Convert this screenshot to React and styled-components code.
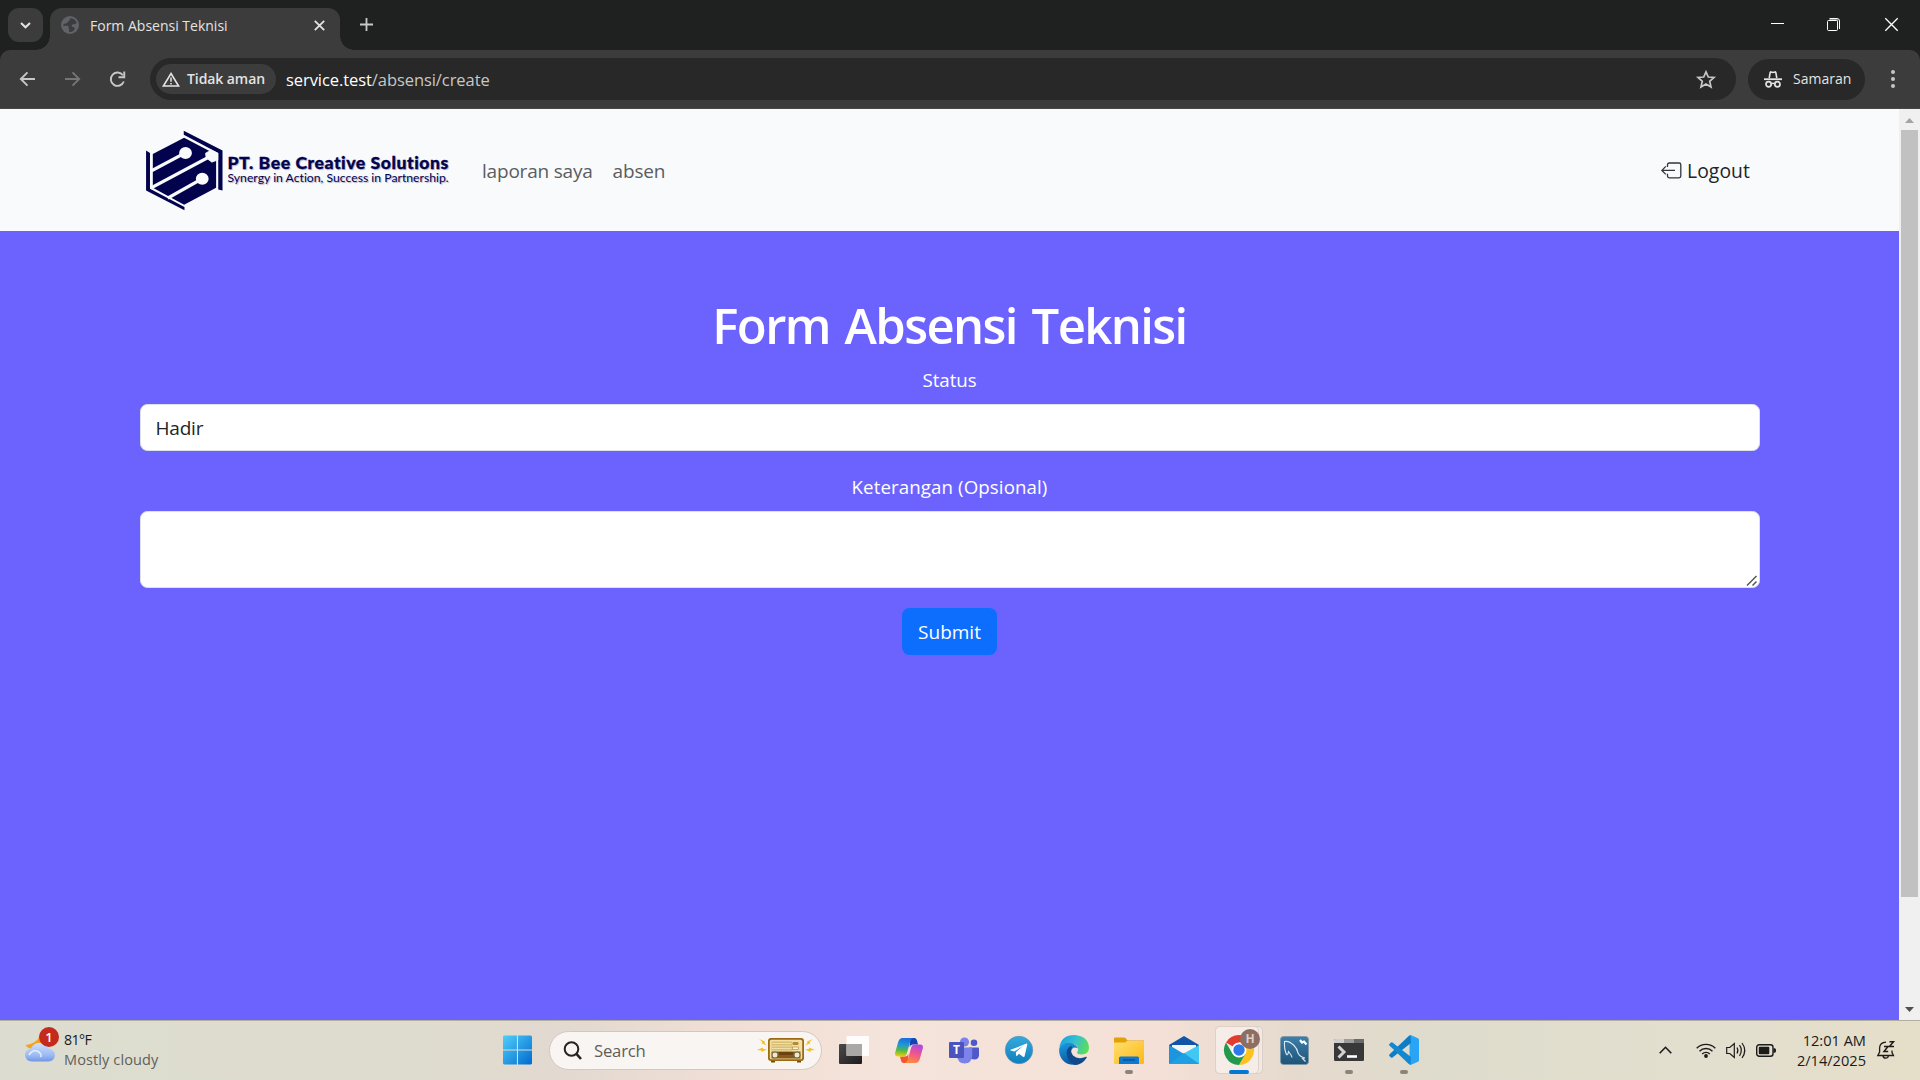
import React from "react";
import styled, { createGlobalStyle, css } from "styled-components";

const Global = createGlobalStyle`
  * { box-sizing: border-box; }
  html, body { margin: 0; padding: 0; overflow: hidden; }
  body { font-family: "Open Sans", "Noto Sans", sans-serif; }
  svg { display: block; flex: none; overflow: visible; }
`;

const Screen = styled.div`
  width: 1920px;
  height: 1080px;
  display: flex;
  flex-direction: column;
  overflow: hidden;
`;

const Label = styled.span`
  font-size: ${(p) => p.$size}px;
  font-weight: ${(p) => p.$weight || 400};
  letter-spacing: ${(p) => p.$track || 0}px;
  color: ${(p) => p.$color || "inherit"};
  line-height: ${(p) => p.$line || 20}px;
  white-space: nowrap;
`;

/* ---------- browser chrome ---------- */
const TabStrip = styled.div`
  height: 50px;
  flex: none;
  background: #1f2120;
  display: flex;
  align-items: flex-start;
  padding: 8px 0 0 8px;
`;
const TabSearch = styled.button`
  width: 35px;
  height: 34px;
  border: 0;
  border-radius: 11px;
  background: #3c3c3c;
  display: flex;
  align-items: center;
  justify-content: center;
  padding: 0;
`;
const Tab = styled.div`
  position: relative;
  width: 290px;
  height: 42px;
  margin-left: 7px;
  padding: 0 15px 8px 11px;
  border-radius: 12px 12px 0 0;
  background: #3c3c3c;
  display: flex;
  align-items: center;
  &::before,
  &::after {
    content: "";
    position: absolute;
    bottom: 0;
    width: 14px;
    height: 14px;
  }
  &::before {
    left: -14px;
    background: radial-gradient(circle at 0 0, transparent 13.5px, #3c3c3c 14px);
  }
  &::after {
    right: -14px;
    background: radial-gradient(circle at 100% 0, transparent 13.5px, #3c3c3c 14px);
  }
`;
const TabTitle = styled.div`
  flex: 1;
  padding: 2px 0 0 11px;
  color: #e3e3e3;
  display: flex;
`;
const NewTab = styled.div`
  padding: 10px 0 0 19.5px;
`;
const WindowButtons = styled.div`
  margin-left: auto;
  display: flex;
  height: 33px;
`;
const WindowButton = styled.div`
  width: 57px;
  height: 33px;
  display: flex;
  align-items: center;
  justify-content: center;
`;
const ToolbarBack = styled.div`
  background: #1f2120;
  flex: none;
`;
const Toolbar = styled.div`
  height: 59px;
  background: #3c3c3c;
  border-bottom: 1px solid #474747;
  border-radius: 10px 10px 0 0;
  display: flex;
  align-items: center;
  padding: 0 24px 0 18px;
`;
const NavButtons = styled.div`
  width: 132px;
  display: flex;
  gap: 26px;
`;
const Omnibox = styled.div`
  width: 1586px;
  height: 42px;
  border-radius: 21px;
  background: #282828;
  display: flex;
  align-items: center;
  padding: 0 20px 0 6px;
`;
const SecurityChip = styled.div`
  width: 120px;
  height: 30px;
  border-radius: 15px;
  background: #3c3c3c;
  color: #e3e3e3;
  display: flex;
  align-items: center;
  gap: 7px;
  padding-left: 6px;
`;
const Url = styled.div`
  flex: 1;
  padding: 2px 0 0 10px;
  color: #c7c7c7;
  display: flex;
  b {
    font-weight: 400;
    color: #fff;
  }
`;
const ProfilePill = styled.div`
  margin-left: 12px;
  width: 117px;
  height: 41px;
  border-radius: 21px;
  background: #282828;
  color: #e3e3e3;
  display: flex;
  align-items: center;
  gap: 11px;
  padding-left: 16px;
`;
const MenuDots = styled.div`
  margin-left: auto;
  width: 7px;
  display: flex;
  flex-direction: column;
  align-items: center;
  gap: 3px;
  i {
    width: 4px;
    height: 4px;
    border-radius: 2px;
    background: #c7c7c7;
  }
`;

/* ---------- page ---------- */
const Viewport = styled.div`
  flex: 1;
  display: flex;
  min-height: 0;
`;
const Page = styled.div`
  width: 1899px;
  background: #6c63ff;
`;
const Navbar = styled.nav`
  height: 122px;
  background: #f8fafc;
  display: flex;
  align-items: center;
  padding: 0 149px 0 144.5px;
`;
const Brand = styled.div`
  display: flex;
  align-items: center;
  width: 337.5px;
`;
const BrandText = styled.div`
  display: flex;
  flex-direction: column;
  padding: 0 0 1px 3px;
  color: #03024d;
  font-family: Lato, sans-serif;
  text-shadow: 1px 1px 1px rgba(3, 2, 77, 0.3);
`;
const BrandName = styled(Label)`
  -webkit-text-stroke: 0.3px #03024d;
`;
const NavLinks = styled.div`
  display: flex;
  gap: 20px;
  padding-top: 1px;
  color: #5b5d5f;
`;
const Logout = styled.a`
  margin-left: auto;
  display: flex;
  align-items: center;
  gap: 5px;
  padding-top: 1px;
  color: #212529;
`;
const Form = styled.form`
  margin: 0 139.5px;
  padding-top: 61px;
  display: flex;
  flex-direction: column;
  align-items: center;
  color: #fff;
`;
const Heading = styled.h1`
  margin: 0 0 11px;
  height: 60px;
  font-size: 49px;
  font-weight: 600;
  line-height: 66px;
  letter-spacing: -1.6px;
  word-spacing: 3.5px;
  white-space: nowrap;
`;
const Field = styled.div`
  width: 100%;
  display: flex;
  flex-direction: column;
  align-items: center;
  margin-bottom: 20px;
`;
const FieldLabel = styled.label`
  height: ${(p) => p.$height}px;
  padding-top: ${(p) => p.$top}px;
  display: flex;
`;
const box = css`
  width: 100%;
  border: 1px solid #dee2e6;
  border-radius: 7.5px;
  background: #fff;
`;
const SelectBox = styled.div`
  ${box}
  height: 47px;
  padding-left: 15px;
  color: #212529;
  display: flex;
  align-items: center;
`;
const AreaWrap = styled.div`
  position: relative;
  width: 100%;
  height: 77px;
`;
const Area = styled.textarea`
  ${box}
  display: block;
  height: 77px;
  resize: none;
`;
const Grip = styled.svg`
  position: absolute;
  right: 2px;
  bottom: 1px;
`;
const Submit = styled.button`
  width: 95px;
  height: 47px;
  border: 0;
  border-radius: 7.5px;
  background: #0d6efd;
  color: #fff;
  font-family: inherit;
  display: flex;
  align-items: center;
  justify-content: center;
  padding: 1px 0 0;
`;
const Scrollbar = styled.div`
  width: 21px;
  background: #f0f0f0;
  display: flex;
  flex-direction: column;
  align-items: center;
  padding: 9px 0 0;
`;
const Thumb = styled.div`
  width: 17px;
  height: 767px;
  margin: 7px 0 110px;
  background: #c1c1c1;
`;

/* ---------- taskbar ---------- */
const Taskbar = styled.div`
  height: 60px;
  flex: none;
  border-top: 1px solid #b3ae9f;
  background: linear-gradient(
    90deg,
    #dcddd0 0,
    #dedccf 400px,
    #e2d9d0 560px,
    #f1dfd5 740px,
    #f5e4db 900px,
    #f4e0d6 1160px,
    #e6dace 1290px,
    #dedccc 1440px,
    #e2dfcf 1700px,
    #e5dec9 1920px
  );
  display: flex;
  align-items: center;
  padding-bottom: 1px;
`;
const Weather = styled.div`
  width: 490px;
  padding-left: 25px;
  display: flex;
  gap: 8px;
`;
const WeatherIcon = styled.div`
  position: relative;
  width: 31px;
  height: 40px;
`;
const Badge = styled.div`
  position: absolute;
  left: 14px;
  top: -3px;
  width: 20px;
  height: 20px;
  border-radius: 50%;
  background: #c42b1c;
  color: #fff;
  display: flex;
  align-items: center;
  justify-content: center;
`;
const Lines = styled.div`
  display: flex;
  flex-direction: column;
  align-items: ${(p) => (p.$end ? "flex-end" : "flex-start")};
`;
const Apps = styled.div`
  display: flex;
  align-items: center;
  height: 58px;
`;
const Slot = styled.div`
  position: relative;
  width: 55px;
  height: 48px;
  display: flex;
  align-items: center;
  justify-content: center;
`;
const Dot = styled.i`
  position: absolute;
  bottom: 0;
  left: 50%;
  width: ${(p) => (p.$active ? 20 : 8)}px;
  height: 4px;
  margin-left: ${(p) => (p.$active ? -10 : -4)}px;
  border-radius: 2px;
  background: ${(p) => (p.$active ? "#0078d4" : "#8b847d")};
`;
const ActiveTile = styled.div`
  position: absolute;
  left: 3.5px;
  top: 0;
  width: ${(p) => (p.$back ? 48 : 44)}px;
  height: 48px;
  border-radius: 5px;
  border: 1px solid rgba(200, 185, 175, 0.55);
  background: ${(p) => (p.$back ? "#f3e9e3" : "#f6ede9")};
`;
const Front = styled.div`
  position: relative;
`;
const Initial = styled.div`
  position: absolute;
  left: 16px;
  top: -6px;
  width: 20px;
  height: 20px;
  border-radius: 50%;
  background: #8d6e63;
  color: #dccfca;
  display: flex;
  align-items: center;
  justify-content: center;
`;
const Search = styled.div`
  width: 273px;
  height: 39px;
  margin: 0 4.5px 0 4px;
  border-radius: 20px;
  border: 1px solid #d3c8c1;
  background: #f9f5f2;
  display: flex;
  align-items: center;
  padding: 0 6px 0 13px;
  color: #5f5d5b;
`;
const SearchText = styled.div`
  flex: 1;
  display: flex;
  padding: 1px 0 0 12px;
`;
const Tray = styled.div`
  margin-left: auto;
  display: flex;
  align-items: center;
  padding-right: 25px;
  color: #1b1b1b;
`;
const TrayIcons = styled.div`
  display: flex;
  align-items: center;
  gap: 10px;
  margin: 0 20px 0 24px;
`;
const ClockWrap = styled.div`
  width: 70px;
  margin-right: 11px;
`;

const stroke = (c, w) => ({ fill: "none", stroke: c, strokeWidth: w });

const BrandMark = () => (
  <svg width="80" height="83" viewBox="40 55 225 250" preserveAspectRatio="none">
    <g fill="#03024d">
      <path d="M149 60L258 120V240L246 237V127L149 72Z" />
      <path d="M43 120L54 127V235L151 290V300L43 240Z" />
      <path d="M150 81L240 132V232L150 283L62 232V130Z" />
    </g>
    <g stroke="#f8fafc" strokeWidth="10" fill="#f8fafc">
      <path d="M153 127L58 181" />
      <path d="M226 136L56 233" />
      <path d="M200 205L104 263" />
      <circle cx="154" cy="127" r="13" />
      <circle cx="201" cy="205" r="13" />
      <path d="M210 128L226 118L245 128V148L228 155L212 142Z" strokeWidth="2" />
    </g>
  </svg>
);

const Globe = () => (
  <svg width="18" height="18" viewBox="0 0 18 18">
    <circle cx="9" cy="9" r="9" fill="#5f6368" />
    <path d="M10 2.2C8 3 9 5 7.300 5.500C6 6 6.500 7.500 5 7.600C3.500 7.600 2.500 8 2 9.500C3 10 5.500 9.300 7 10C8.500 10.500 7 12.500 8 13.500C8.500 14 8 15 8 16C11 16.500 13.500 14.500 13.800 12.500C13.500 11 12 11.500 11 10.500C10 9 11.500 8 13 8.300C14.500 8.500 15 7 15.700 7C15 4.500 13 2.300 10 2.200Z" fill="#3c3c3c" />
  </svg>
);

const Radio = () => (
  <svg width="58" height="26" viewBox="0 0 58 26">
    <g fill="#f3c11b">
      <path d="M2 2L8 4.500L7.500 6L10 8.500L4.500 6.200L5.500 5Z" />
      <path d="M0 13L6 10.500L6 12L10 12.500L4.500 15L4.500 13.500Z" />
      <path d="M56 2L50 4.500L50.500 6L48 8.500L53.500 6.200L52.500 5Z" />
      <path d="M58 13L52 10.500L52 12L48 12.500L53.500 15L53.500 13.500Z" />
    </g>
    <path d="M14 23H18V25.500H14ZM40 23H44V25.500H40Z" fill="#6b4a10" />
    <rect x="11" y="1" width="36" height="23" rx="3" fill="#9b6a12" />
    <rect x="12.800" y="2.800" width="32.400" height="19.400" rx="1.500" fill="#f1dfa4" />
    <rect x="14.500" y="4.500" width="20.500" height="9" fill="#d8bd72" />
    <path d="M15 6.500H34.500M15 9H34.500M15 11.500H34.500" stroke="#efdfa8" strokeWidth="1" />
    <rect x="35.500" y="5" width="6" height="3" rx="1" fill="#b38a35" />
    <rect x="35.500" y="10" width="6" height="2.500" fill="#fff5d8" stroke="#a87c24" strokeWidth=".6" />
    <rect x="14.500" y="14.500" width="29" height="7" fill="#8a5a1c" />
    <rect x="22" y="15" width="14" height="3" fill="#6b4210" />
    <circle cx="18" cy="18" r="3" fill="#f2e8c8" stroke="#6f6a55" strokeWidth="1" />
    <circle cx="40" cy="18" r="3" fill="#f2e8c8" stroke="#6f6a55" strokeWidth="1" />
  </svg>
);

const Start = () => (
  <svg width="29" height="30" viewBox="0.5 0 29 30">
    <defs>
      <linearGradient id="st" x1="0" y1="0" x2="1" y2="1">
        <stop offset="0" stopColor="#4fd0fb" />
        <stop offset="1" stopColor="#0069cf" />
      </linearGradient>
    </defs>
    <path d="M1.500 .5H14.400V14.400H.5V1.500ZM15.500 .5H28.500L29.500 1.500V14.400H15.500ZM.5 15.500H14.400V29.500H1.500L.5 28.500ZM15.500 15.500H29.500V28.500L28.500 29.500H15.500Z" fill="url(#st)" />
  </svg>
);
const TaskView = () => (
  <svg width="30" height="28" viewBox="0 0 30 28">
    <defs>
      <linearGradient id="tv" x1="0" y1="0" x2="1" y2="1">
        <stop offset="0" stopColor="#4a4a4a" />
        <stop offset="1" stopColor="#1c1c1c" />
      </linearGradient>
    </defs>
    <rect x="0" y="8" width="23" height="20" rx="1" fill="url(#tv)" />
    <rect x="7.500" y="0" width="22.500" height="20" rx="1" fill="#fff" opacity=".9" />
    <path d="M7.500 8H23V20H7.500Z" fill="#a9a8a7" />
  </svg>
);
const Copilot = () => (
  <svg width="28" height="25" viewBox="0 0 28 25">
    <defs>
      <linearGradient id="cp1" x1=".3" y1="0" x2=".2" y2="1">
        <stop offset="0" stopColor="#1a6fe0" />
        <stop offset=".35" stopColor="#2098d4" />
        <stop offset=".65" stopColor="#52b84a" />
        <stop offset="1" stopColor="#f5d000" />
      </linearGradient>
      <linearGradient id="cp2" x1=".7" y1="0" x2=".4" y2="1">
        <stop offset="0" stopColor="#a94be0" />
        <stop offset=".5" stopColor="#f0568e" />
        <stop offset="1" stopColor="#ff8a3d" />
      </linearGradient>
    </defs>
    <path d="M17 0H19.500Q21.500 0 22 2.500L23 6.500H18Q15.500 6.500 14.500 9L15 3Q15.500 .5 17 0Z" fill="#1443b4" />
    <path d="M11 25H8.500Q6.500 25 6 22.500L5 18.500H10Q12.500 18.500 13.500 16L13 22Q12.500 24.500 11 25Z" fill="#f2562e" />
    <path d="M7.500 0H18.500Q16 .7 15.300 3L11.800 15.500Q11 18.500 8 18.500H3Q-.7 18.500 .2 14.500L3.200 4Q4.500 0 7.500 0Z" fill="url(#cp1)" />
    <path d="M20.500 25H9.500Q12 24.300 12.700 22L16.200 9.500Q17 6.500 20 6.500H25Q28.700 6.500 27.800 10.500L24.800 21Q23.500 25 20.500 25Z" fill="url(#cp2)" />
  </svg>
);
const TeamsBox = styled.div`
  position: absolute;
  left: 12.5px;
  top: 16px;
  width: 15px;
  height: 16px;
  border-radius: 1px;
  background: #4b53bc;
  color: #fff;
  display: flex;
  align-items: center;
  justify-content: center;
`;
const Teams = () => (
  <>
    <svg width="30" height="27" viewBox="0 0 30 27">
      <circle cx="15.500" cy="5" r="4.600" fill="#7b83eb" />
      <circle cx="25" cy="5.800" r="3.300" fill="#5059c9" />
      <path d="M20 10.500H29Q30 10.500 30 11.500V18.500Q29.500 22.500 25.500 22.500Q22 22.500 20 20Z" fill="#5059c9" />
      <path d="M8 10.500H22Q23.200 10.500 23.200 11.700V19Q22.500 26.500 15.500 26.500Q9 26.500 8 19Z" fill="#7b83eb" />
    </svg>
    <TeamsBox><Label $size={12} $weight={700} $line={14}>T</Label></TeamsBox>
  </>
);
const Telegram = () => (
  <svg width="28" height="28" viewBox="0 0 28 28">
    <defs>
      <linearGradient id="tg" x1="0" y1="0" x2="0" y2="1">
        <stop offset="0" stopColor="#34aadf" />
        <stop offset="1" stopColor="#0f7fbb" />
      </linearGradient>
    </defs>
    <circle cx="14" cy="14" r="13.700" fill="url(#tg)" stroke="#5e8fa8" strokeWidth=".7" />
    <path d="M5.500 13.800L21.500 7.600Q22.500 7.500 22.200 8.800L19.600 20.300Q19.200 21.400 18 20.700L14 17.800L11.900 19.900Q11.300 20.300 11.200 19.400L10.800 16.200L18.300 9.800L9.300 15.500L5.700 14.500Q5 14.200 5.500 13.800Z" fill="#fff" />
  </svg>
);
const Edge = () => (
  <svg width="30" height="30" viewBox="0 0 30 30">
    <defs>
      <linearGradient id="ed1" x1="0" y1=".3" x2="1" y2=".6">
        <stop offset="0" stopColor="#1f9fdd" />
        <stop offset=".5" stopColor="#35c1d0" />
        <stop offset="1" stopColor="#5ede52" />
      </linearGradient>
      <linearGradient id="ed2" x1="0" y1="0" x2=".3" y2="1">
        <stop offset="0" stopColor="#1b9de2" />
        <stop offset="1" stopColor="#0c59a4" />
      </linearGradient>
    </defs>
    <path d="M.3 13Q2 0 15.500 0Q29.500 1 30 13Q29.500 19.500 22.500 19.500Q17.500 19.500 18.200 17Q20.500 13.500 17.500 10.500Q10 5.500 .3 13Z" fill="url(#ed1)" />
    <path d="M.2 13.500Q5 6.500 12 8Q17.500 9.500 19 13.500Q14 10.500 12 16Q10.500 25 19 29.200Q10 31.500 4 25.500Q-.5 20.500 .2 13.500Z" fill="url(#ed2)" />
    <path d="M7.500 17Q8.500 11.500 13.500 11Q10.500 16 14 20.500Q19 25 27 21.800Q28.200 21.500 27.500 23Q23 30 16 30Q8 27 7.500 17Z" fill="#114a8b" />
  </svg>
);
const Explorer = () => (
  <svg width="30" height="27" viewBox="0 0 30 27">
    <defs>
      <linearGradient id="ex" x1="0" y1="0" x2="1" y2="1">
        <stop offset="0" stopColor="#ffdf6e" />
        <stop offset="1" stopColor="#fcb816" />
      </linearGradient>
    </defs>
    <path d="M0 1.500Q0 .5 1 .5H10Q11 .5 12 1.600L13.500 3.500H30V8H0Z" fill="#e3a008" />
    <path d="M0 5.500H11L13 4H29Q30 4 30 5V26Q30 27 29 27H1Q0 27 0 26Z" fill="url(#ex)" />
    <path d="M5 27V21Q5 19.500 6.500 19.500H23.500Q25 19.500 25 21V27Z" fill="#0f78cf" />
    <path d="M9 23H21" stroke="#0b4a8f" strokeWidth="1.200" />
  </svg>
);
const Mail = () => (
  <svg width="30" height="28" viewBox="0 0 30 28">
    <path d="M0 9L15 0L30 9V12H0Z" fill="#0f54a8" />
    <path d="M3 9H27V14L15 20L3 14Z" fill="#f4f4f4" />
    <path d="M0 9L30 27Q30 28 29 28H1Q0 28 0 27Z" fill="#1c94de" />
    <path d="M30 9L13 18.500L30 27.500Z" fill="#40c8f2" />
    <path d="M0 28L15 17L30 28Z" fill="#1f9fe4" />
  </svg>
);
const Chrome = () => (
  <svg width="30" height="30" viewBox="0 0 30 30">
    <path d="M15 15L2 7.500A15 15 0 0 1 28 7.500H15Z" fill="#e33b2e" />
    <path d="M15 7.500H28A15 15 0 0 1 15 30L21.500 18.700Z" fill="#fcc31e" />
    <path d="M2 7.500A15 15 0 0 0 15 30L21.500 18.700L15 15L8.500 18.700Z" fill="#239a4b" />
    <circle cx="15" cy="15" r="7.500" fill="#fff" />
    <circle cx="15" cy="15" r="5.700" fill="#2f78ea" />
  </svg>
);
const MySql = () => (
  <svg width="29" height="29" viewBox="0 0 29 29">
    <defs>
      <linearGradient id="my" x1="0" y1="0" x2="0" y2="1">
        <stop offset="0" stopColor="#3c7fab" />
        <stop offset="1" stopColor="#1f5478" />
      </linearGradient>
    </defs>
    <rect x=".5" y=".5" width="28" height="28" rx="3" fill="url(#my)" stroke="#7d97a6" strokeWidth=".8" />
    <path d="M6.500 18.500Q4 13 4.500 5.500Q9 4.500 14 9.500Q17.500 13 18 17Q20 21 25 22L22.500 22.500L25.500 25.500M6.500 18.500Q8 19.500 8.500 15.500Q11.500 19 12 21.500" {...stroke("#dbe9f1", 1.1)} />
    <path d="M20 4L22 6.500L24 5.500L26.500 8.500" {...stroke("#fff", 2.2)} />
  </svg>
);
const Terminal = () => (
  <svg width="30" height="22" viewBox="0 0 30 22">
    <rect width="30" height="22" rx="1.300" fill="#383838" />
    <path d="M0 4V1Q0 0 1 0H10V4Z" fill="#cfcfcf" />
    <path d="M10 0H20V4H10Z" fill="#9c9c9c" />
    <path d="M20 0H29Q30 0 30 1V4H20Z" fill="#6a6a6a" />
    <path d="M4.500 7.500L10 13L4.500 18.500" {...stroke("#d2d2d2", 3)} />
    <path d="M13 17.500H23" {...stroke("#fff", 2.6)} />
  </svg>
);
const VsCode = () => (
  <svg width="30" height="30" viewBox="0 0 30 30">
    <path d="M21.500 0L29 3.300Q30 3.800 30 5V25Q30 26.200 29 26.700L21.500 30L20.500 28V2Z" fill="#2aa4f4" />
    <path d="M21.500 0L22 8L3.500 22.500Q2.800 23 2 22.400L.4 21Q-.3 20.200 .4 19.500L20 .8Z" fill="#0f7cc4" />
    <path d="M21.500 30L22 22L3.500 7.500Q2.800 7 2 7.600L.4 9Q-.3 9.800 .4 10.500L20 29.200Z" fill="#1088d2" />
  </svg>
);
const Cloud = () => (
  <svg width="31" height="40" viewBox="0 0 31 40">
    <defs>
      <linearGradient id="cl" x1="0" y1="0" x2="0" y2="1">
        <stop offset="0" stopColor="#cfe0fb" />
        <stop offset=".65" stopColor="#9dbcf3" />
        <stop offset="1" stopColor="#6f97e4" />
      </linearGradient>
    </defs>
    <path d="M15 3Q14 13 .5 15Q3 19 8 19L17 13L22 6Z" fill="#f4a51f" />
    <path d="M7.500 31.500Q0 31 0 24.500Q.5 19.500 6 18.500Q8.500 12.500 15.500 13Q21.500 13.500 23.500 18.500Q29.500 19.500 30 25Q29.500 31 23.500 31.500Z" fill="url(#cl)" />
    <path d="M4 25Q8 18.500 14 22Q17 24.500 15.500 27" {...stroke("#e4eefe", 1.6)} />
  </svg>
);

const apps = [
  [TaskView], [Copilot], [Teams], [Telegram], [Edge], [Explorer, true], [Mail],
];
const appsAfter = [[MySql], [Terminal, true], [VsCode, true]];

const AppSlot = ({ icon: Icon, running }) => (
  <Slot>
    <Icon />
    {running && <Dot />}
  </Slot>
);

export default function App() {
  return (
    <Screen>
      <Global />
      <TabStrip>
        <TabSearch>
          <svg width="11" height="7" viewBox="0 0 11 7"><path d="M1 1L5.500 5.300L10 1" {...stroke("#e3e3e3", 2)} /></svg>
        </TabSearch>
        <Tab>
          <Globe />
          <TabTitle><Label $size={14}>Form Absensi Teknisi</Label></TabTitle>
          <svg width="11" height="11" viewBox="0 0 11 11"><path d="M.8 .8L10.200 10.200M10.200 .8L.8 10.200" {...stroke("#e3e3e3", 1.8)} /></svg>
        </Tab>
        <NewTab>
          <svg width="13" height="13" viewBox="0 0 13 13"><path d="M6.500 0V13M0 6.500H13" {...stroke("#c9c9c9", 1.8)} /></svg>
        </NewTab>
        <WindowButtons>
          <WindowButton><svg width="13" height="13" viewBox="0 0 13 13"><path d="M0 5.500H13" {...stroke("#fff", 1)} /></svg></WindowButton>
          <WindowButton>
            <svg width="15" height="13" viewBox="0 0 15 13">
              <path d="M2.500 .5H10Q12.500 .5 12.500 3V11" {...stroke("#fff", 1)} />
              <path d="M2.500 1.500H10.500V11" {...stroke("#8f8f8f", 1)} />
              <rect x=".5" y="2.500" width="10" height="10" rx="1" {...stroke("#fff", 1)} />
            </svg>
          </WindowButton>
          <WindowButton><svg width="13" height="13" viewBox="0 0 13 13"><path d="M.3 .3L12.700 12.700M12.700 .3L.3 12.700" {...stroke("#fff", 1.3)} /></svg></WindowButton>
        </WindowButtons>
      </TabStrip>
      <ToolbarBack>
        <Toolbar>
          <NavButtons>
            <svg width="19" height="16" viewBox="0 0 19 16"><path d="M17 8H3M9.500 1.300L2.800 8L9.500 14.700" {...stroke("#c7c7c7", 1.9)} /></svg>
            <svg width="19" height="16" viewBox="0 0 19 16"><path d="M2 8H16M9.500 1.300L16.200 8L9.500 14.700" {...stroke("#757575", 1.9)} /></svg>
            <svg width="19" height="16" viewBox="0 0 19 16"><path d="M15.800 10.500A6.700 6.700 0 1 1 15 4.300" {...stroke("#c7c7c7", 1.9)} /><path d="M17.200 .5V7.200H10.500V5.300H15.300V.5Z" fill="#c7c7c7" /></svg>
          </NavButtons>
          <Omnibox>
            <SecurityChip>
              <svg width="18" height="15" viewBox="0 0 18 15"><path d="M9 1.500L16.600 14H1.400Z" {...stroke("#e3e3e3", 1.6)} /><path d="M9 5.500V9.800M9 11V12.600" {...stroke("#e3e3e3", 1.5)} /></svg>
              <Label $size={14} $weight={600} $track={-0.08}>Tidak aman</Label>
            </SecurityChip>
            <Url><Label $size={16.5} $track={-0.07}><b>service.test</b>/absensi/create</Label></Url>
            <svg width="20" height="19" viewBox="0 0 20 19"><path d="M10 1.800L12.300 7L18 7.500L13.700 11.300L15 16.900L10 13.900L5 16.900L6.300 11.300L2 7.500L7.700 7Z" {...stroke("#c7c7c7", 1.7)} /></svg>
          </Omnibox>
          <ProfilePill>
            <svg width="18" height="17" viewBox="0 0 18 17">
              <path d="M5.200 7L6.200 1.500Q6.400 .7 7.200 1L9 1.500L10.800 1Q11.600 .7 11.800 1.500L12.800 7" {...stroke("#e3e3e3", 1.6)} />
              <path d="M0 8.200H18" {...stroke("#e3e3e3", 1.8)} />
              <circle cx="4.600" cy="13.300" r="2.600" {...stroke("#e3e3e3", 1.7)} />
              <circle cx="13.400" cy="13.300" r="2.600" {...stroke("#e3e3e3", 1.7)} />
              <path d="M7.200 12.800Q9 11.600 10.800 12.800" {...stroke("#e3e3e3", 1.4)} />
            </svg>
            <Label $size={14}>Samaran</Label>
          </ProfilePill>
          <MenuDots><i /><i /><i /></MenuDots>
        </Toolbar>
      </ToolbarBack>

      <Viewport>
        <Page>
          <Navbar>
            <Brand>
              <BrandMark />
              <BrandText>
                <BrandName $size={17.6} $weight={900} $track={0.55} $line={16}>PT. Bee Creative Solutions</BrandName>
                <Label $size={12.2} $track={0.01} $line={14}>Synergy in Action, Success in Partnership.</Label>
              </BrandText>
            </Brand>
            <NavLinks>
              <Label $size={19} $track={-0.2} $line={30}>laporan saya</Label>
              <Label $size={19} $track={-0.2} $line={30}>absen</Label>
            </NavLinks>
            <Logout>
              <svg width="21" height="17" viewBox="0 0 21 17">
                <path d="M6.500 5V2.800Q6.500 1 8.300 1H18Q19.800 1 19.800 2.800V14Q19.800 15.800 18 15.800H8.300Q6.500 15.800 6.500 14V11.800" {...stroke("#30353b", 1.3)} />
                <path d="M14 8.400H1.200M4.800 4.400L.9 8.400L4.800 12.400" {...stroke("#30353b", 1.3)} />
              </svg>
              <Label $size={19.3} $track={0.1} $line={30}>Logout</Label>
            </Logout>
          </Navbar>
          <Form>
            <Heading>Form Absensi Teknisi</Heading>
            <Field>
              <FieldLabel $height={41} $top={3}><Label $size={18.7} $track={-0.05} $line={28}>Status</Label></FieldLabel>
              <SelectBox><Label $size={19} $track={-0.2} $line={30}>Hadir</Label></SelectBox>
            </Field>
            <Field>
              <FieldLabel $height={40} $top={1}><Label $size={18.7} $track={0.1} $line={30}>Keterangan (Opsional)</Label></FieldLabel>
              <AreaWrap>
                <Area />
                <Grip width="12" height="12" viewBox="0 0 12 12"><path d="M1 10.500L10.500 1M6.500 10.500L10.500 6.500" {...stroke("#555", 1.5)} /></Grip>
              </AreaWrap>
            </Field>
            <Submit type="button"><Label $size={19} $line={30}>Submit</Label></Submit>
          </Form>
        </Page>
        <Scrollbar>
          <svg width="9" height="5" viewBox="0 0 9 5"><path d="M4.500 0L9 5H0Z" fill="#a3a3a3" /></svg>
          <Thumb />
          <svg width="9" height="5" viewBox="0 0 9 5"><path d="M4.500 5L0 0H9Z" fill="#505050" /></svg>
        </Scrollbar>
      </Viewport>

      <Taskbar>
        <Weather>
          <WeatherIcon>
            <Cloud />
            <Badge><Label $size={13} $weight={600}>1</Label></Badge>
          </WeatherIcon>
          <Lines>
            <Label $size={14.2} $track={-0.6} $color="#1b1b1b">81°F</Label>
            <Label $size={14.5} $track={0.12} $color="#5f5f5b">Mostly cloudy</Label>
          </Lines>
        </Weather>
        <Apps>
          <Slot><Start /></Slot>
          <Search>
            <svg width="19" height="19" viewBox="0 0 19 19"><circle cx="8.500" cy="8" r="6.800" {...stroke("#242424", 2)} /><path d="M13.200 12.700L18 18" {...stroke("#242424", 2.6)} /></svg>
            <SearchText><Label $size={16.7} $track={-0.2}>Search</Label></SearchText>
            <Radio />
          </Search>
          {apps.map(([icon, running], i) => <AppSlot key={i} icon={icon} running={running} />)}
          <Slot>
            <ActiveTile $back />
            <ActiveTile />
            <Front>
              <Chrome />
              <Initial><Label $size={12} $weight={700}>H</Label></Initial>
            </Front>
            <Dot $active />
          </Slot>
          {appsAfter.map(([icon, running], i) => <AppSlot key={i} icon={icon} running={running} />)}
        </Apps>
        <Tray>
          <svg width="13" height="8" viewBox="0 0 13 8"><path d="M.7 7.300L6.500 1.300L12.300 7.300" {...stroke("#1b1b1b", 1.600)} /></svg>
          <TrayIcons>
            <svg width="20" height="15" viewBox="0 0 20 15">
              <path d="M.7 5.300A13 13 0 0 1 19.300 5.300M3.500 8.200A9.200 9.200 0 0 1 16.500 8.200M6.200 11A5.300 5.300 0 0 1 13.800 11" {...stroke("#1b1b1b", 1.400)} />
              <circle cx="10" cy="13" r="1.900" fill="#1b1b1b" />
            </svg>
            <svg width="20" height="17" viewBox="0 0 20 17">
              <path d="M.7 5.500H3.800L8.300 1.500V15.500L3.800 11.500H.7Z" {...stroke("#1b1b1b", 1.200)} />
              <path d="M11 5.500Q12.800 8.500 11 11.500M13.500 3.200Q17.200 8.500 13.500 13.800M16 1Q21.500 8.500 16 16" {...stroke("#1b1b1b", 1.200)} />
            </svg>
            <svg width="20" height="13" viewBox="0 0 20 13">
              <rect x=".7" y=".7" width="16.300" height="11.600" rx="2.500" {...stroke("#1b1b1b", 1.400)} />
              <rect x="2.800" y="2.800" width="10.500" height="7.400" rx="1" fill="#1b1b1b" />
              <path d="M17.500 4.200H19Q20 4.500 20 6.500Q20 8.500 19 8.800H17.500Z" fill="#1b1b1b" />
            </svg>
          </TrayIcons>
          <ClockWrap>
            <Lines $end>
              <Label $size={14.6}>12:01 AM</Label>
              <Label $size={14.6}>2/14/2025</Label>
            </Lines>
          </ClockWrap>
          <svg width="18" height="18" viewBox="0 0 18 18">
            <path d="M9 1.200Q2.800 1.500 2.600 7V11L.8 14.500H16.500L15 11.500V9.500M6 15Q6.500 17.200 8.700 17.200Q11 17.200 11.400 15" {...stroke("#1b1b1b", 1.300)} />
            <path d="M7 5.500H11L7 10.500H11.200M12.500 .8H16.500L12.500 5.500H17" {...stroke("#1b1b1b", 1.500)} />
          </svg>
        </Tray>
      </Taskbar>
    </Screen>
  );
}
